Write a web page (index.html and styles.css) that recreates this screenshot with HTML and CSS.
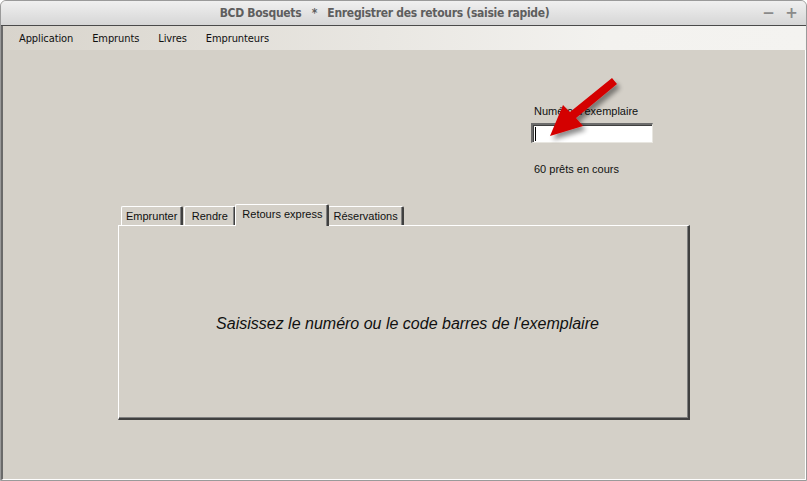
FILE: index.html
```html
<!DOCTYPE html>
<html>
<head>
  <meta charset="utf-8">
  <link rel="stylesheet" href="styles.css">
</head>
<body>
  <div class="window">
    <div class="titlebar">
      <span class="title">BCD Bosquets&nbsp;&nbsp; *&nbsp;&nbsp; Enregistrer des retours (saisie rapide)</span>
      <div class="win-buttons">
        <span class="win-btn">&minus;</span>
        <span class="win-btn">+</span>
      </div>
    </div>

    <div class="menubar">
      <span class="menu-item">Application</span>
      <span class="menu-item">Emprunts</span>
      <span class="menu-item">Livres</span>
      <span class="menu-item">Emprunteurs</span>
    </div>

    <div class="content">
      <div class="field-group">
        <label class="field-label">Numéro d'exemplaire</label>
        <div class="field-input"><span class="caret"></span></div>
        <div class="loan-count">60 prêts en cours</div>
      </div>

      <div class="tabs">
        <div class="tab-strip">
          <span class="tab">Emprunter</span>
          <span class="tab">Rendre</span>
          <span class="tab selected">Retours express</span>
          <span class="tab">Réservations</span>
        </div>
        <div class="tab-panel">
          <p class="hint">Saisissez le numéro ou le code barres de l'exemplaire</p>
        </div>
      </div>

      <svg class="pointer-arrow" width="110" height="90" viewBox="0 0 110 90">
        <defs>
          <filter id="shadow" x="-30%" y="-30%" width="160%" height="160%">
            <feGaussianBlur in="SourceAlpha" stdDeviation="2.5"/>
            <feOffset dx="3" dy="4"/>
            <feComponentTransfer><feFuncA type="linear" slope="0.45"/></feComponentTransfer>
            <feMerge><feMergeNode/><feMergeNode in="SourceGraphic"/></feMerge>
          </filter>
        </defs>
        <g filter="url(#shadow)">
          <path d="M79 9 L84 15 L43 49 L50 57 L17 67 L30 36 L37 43 Z" fill="#d40000"/>
        </g>
      </svg>
    </div>
  </div>
</body>
</html>
```

FILE: styles.css
```css
* {
  box-sizing: border-box;
}

body {
  margin: 0;
  background: #ffffff;
  font-family: "Liberation Sans", Arial, sans-serif;
}

.window {
  width: 807px;
  height: 481px;
  display: flex;
  flex-direction: column;
  background: #d4d0c8;
  border: 1px solid #9a9a9a;
  border-radius: 6px 6px 0 0;
  overflow: hidden;
  position: relative;
}

.titlebar {
  height: 25px;
  flex: none;
  display: flex;
  align-items: center;
  justify-content: center;
  position: relative;
  background: linear-gradient(#f0f0f0, #d6d6d6);
  border-bottom: 1px solid #4a4a4a;
}

.title {
  font-family: "DejaVu Sans Condensed", "DejaVu Sans", sans-serif;
  font-weight: bold;
  font-size: 12px;
  color: #5e5e5e;
  letter-spacing: -0.3px;
  margin-left: -38px;
}

.win-buttons {
  position: absolute;
  right: 8px;
  top: 3px;
  display: flex;
  gap: 10px;
}

.win-btn {
  font-family: "DejaVu Sans", sans-serif;
  font-weight: bold;
  font-size: 15px;
  color: #8a8a8a;
  width: 13px;
  text-align: center;
}

.menubar {
  height: 24px;
  flex: none;
  display: flex;
  align-items: center;
  padding-left: 16px;
  background: linear-gradient(to right, #d8d4cc, #f3f2ef 75%, #f4f3f0);
  border-left: 2px solid #6a6a6a;
}

.menu-item {
  font-family: "DejaVu Sans Condensed", "DejaVu Sans", sans-serif;
  font-size: 11px;
  color: #101010;
  margin-right: 19px;
  letter-spacing: -0.1px;
}

.content {
  flex: 1;
  position: relative;
  border-left: 2px solid #6a6a6a;
  border-right: 1px solid #ffffff;
  border-bottom: 1px solid #ffffff;
  font-size: 11px;
  color: #101010;
}

.field-group {
  margin-left: 528px;
  padding-top: 55px;
  width: 124px;
}

.field-label {
  display: block;
  padding-left: 3px;
  line-height: 13px;
}

.field-input {
  margin-top: 5px;
  height: 20px;
  width: 122px;
  background: #ffffff;
  border-top: 2px solid #6c6c6c;
  border-left: 2px solid #6c6c6c;
  border-right: 1px solid #e8e6e0;
  border-bottom: 1px solid #e8e6e0;
  box-shadow: inset 1px 1px 0 #404040;
  padding: 2px 0 0 2px;
}

.caret {
  display: block;
  width: 1px;
  height: 14px;
  background: #000000;
}

.loan-count {
  margin-top: 20px;
  padding-left: 3px;
  line-height: 13px;
}

.tabs {
  margin-left: 115px;
  margin-top: 28px;
  width: 572px;
}

.tab-strip {
  display: flex;
  align-items: flex-end;
  height: 21px;
  padding-left: 3px;
  position: relative;
  z-index: 1;
}

.tab {
  height: 19px;
  line-height: 18px;
  min-width: 52px;
  text-align: center;
  padding: 0 4px;
  border-top: 1px solid #ffffff;
  border-left: 1px solid #ffffff;
  border-right: 2px solid #404040;
  box-shadow: inset -1px 0 0 #808080;
  border-radius: 2px 2px 0 0;
  margin-right: 1px;
  background: #d4d0c8;
}

.tab.selected {
  height: 22px;
  margin-bottom: -1px;
  padding: 0 5px 2px 6px;
  margin-left: -2px;
  margin-right: -1px;
  position: relative;
  z-index: 2;
}

.tab-panel {
  height: 195px;
  border-top: 1px solid #ffffff;
  border-left: 1px solid #ffffff;
  border-right: 2px solid #404040;
  border-bottom: 2px solid #404040;
  box-shadow: inset -1px -1px 0 #808080;
  display: flex;
  align-items: center;
  justify-content: center;
}

.hint {
  margin: 0 0 0 8px;
  font-style: italic;
  font-size: 16px;
  color: #101010;
  padding-top: 3px;
}

.pointer-arrow {
  position: absolute;
  left: 530px;
  top: 19px;
}
```
